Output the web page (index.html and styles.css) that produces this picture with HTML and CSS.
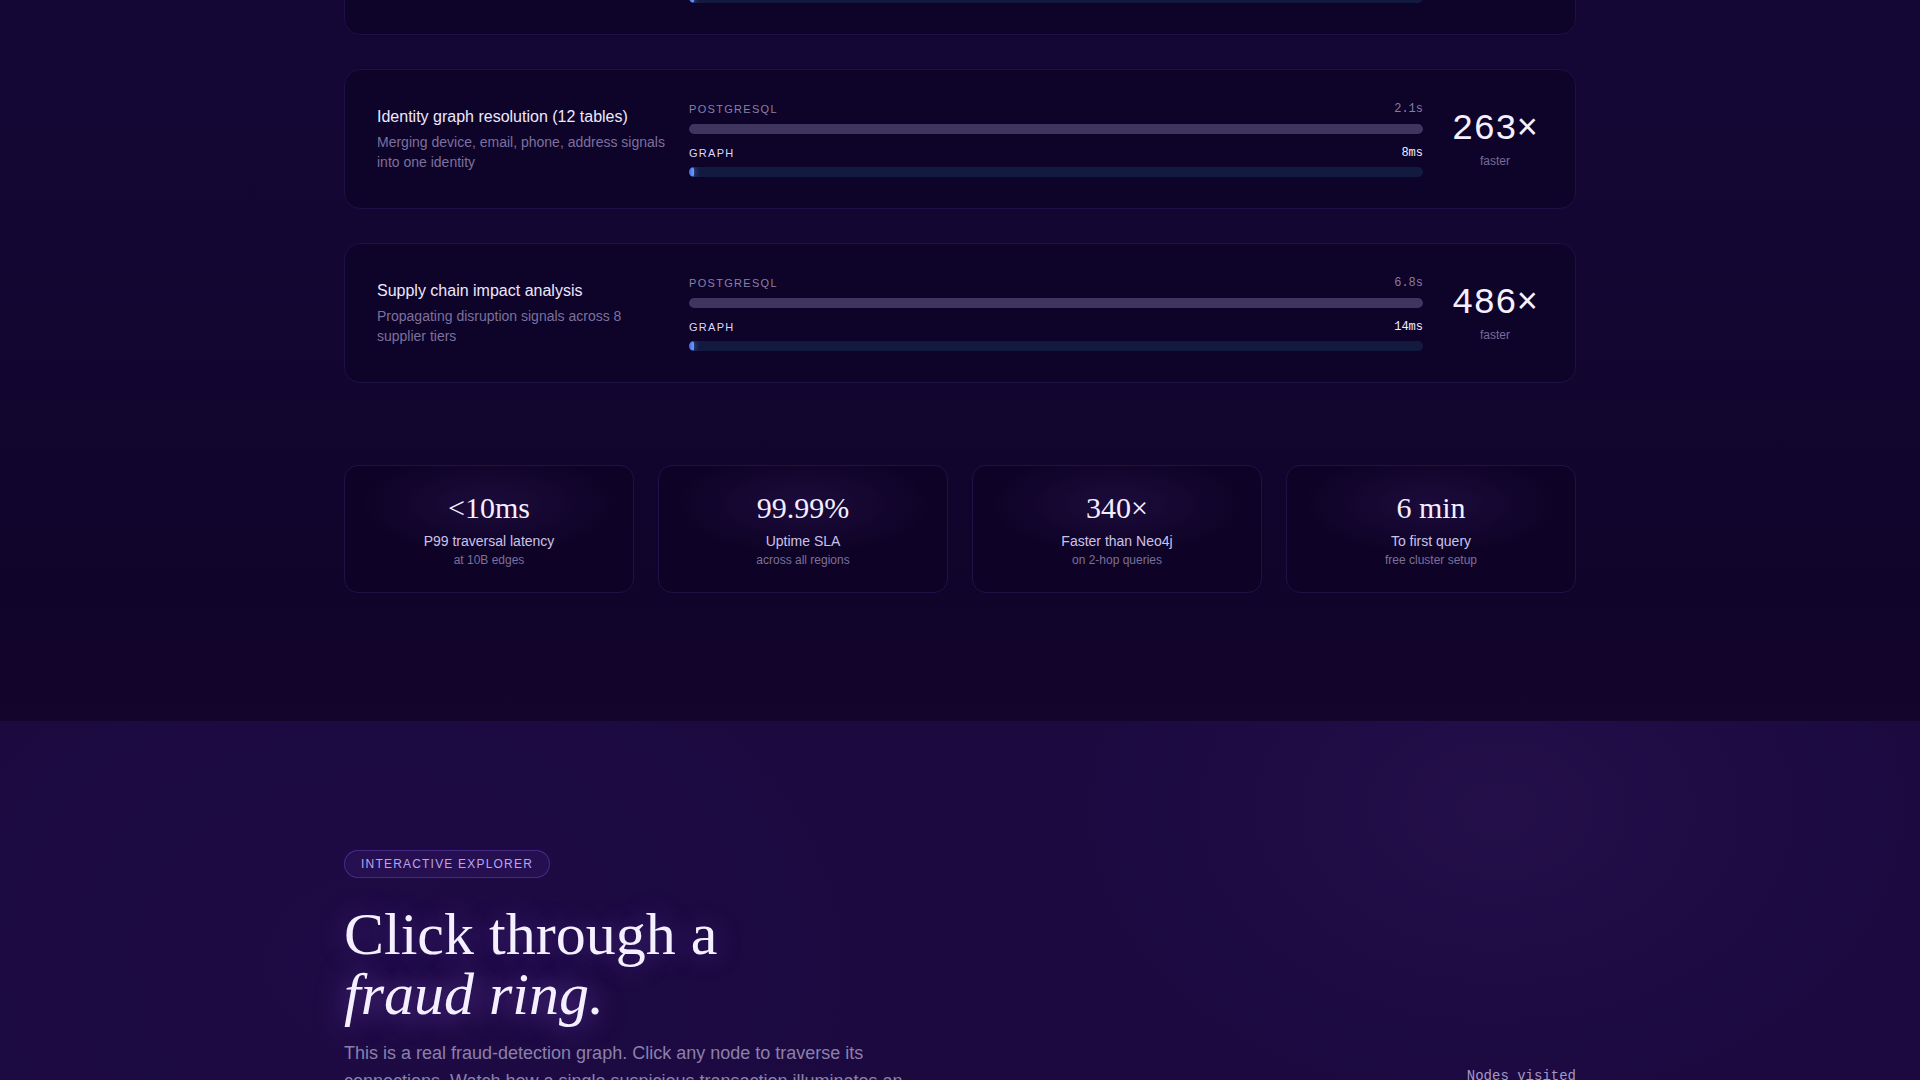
FILE: index.html
```html
<!DOCTYPE html>
<html lang="en">
<head>
<meta charset="utf-8">
<title>Graph benchmarks</title>
<link rel="stylesheet" href="styles.css">
</head>
<body>
<section class="bench">
  <div class="container">
    <div class="bench-list">
      <div class="bench-row">
        <div class="bench-copy">
          <div class="bench-title">Fraud ring detection (6 hops)</div>
          <div class="bench-desc">Following shared devices and cards across linked accounts</div>
        </div>
        <div class="bench-bars">
          <div class="bar-head"><span class="bar-name">POSTGRESQL</span><span class="bar-time">4.7s</span></div>
          <div class="track pg"><div class="fill pg-fill" style="width:100%"></div></div>
          <div class="bar-head graph-head"><span class="bar-name">GRAPH</span><span class="bar-time">11ms</span></div>
          <div class="track gr"><div class="fill gr-fill" style="width:0.3%"></div></div>
        </div>
        <div class="speed"><div class="speed-num">427×</div><div class="speed-lbl">faster</div></div>
      </div>

      <div class="bench-row">
        <div class="bench-copy">
          <div class="bench-title">Identity graph resolution (12 tables)</div>
          <div class="bench-desc">Merging device, email, phone, address signals into one identity</div>
        </div>
        <div class="bench-bars">
          <div class="bar-head"><span class="bar-name">POSTGRESQL</span><span class="bar-time">2.1s</span></div>
          <div class="track pg"><div class="fill pg-fill" style="width:100%"></div></div>
          <div class="bar-head graph-head"><span class="bar-name">GRAPH</span><span class="bar-time">8ms</span></div>
          <div class="track gr"><div class="fill gr-fill" style="width:0.38%"></div></div>
        </div>
        <div class="speed"><div class="speed-num">263×</div><div class="speed-lbl">faster</div></div>
      </div>

      <div class="bench-row">
        <div class="bench-copy">
          <div class="bench-title">Supply chain impact analysis</div>
          <div class="bench-desc">Propagating disruption signals across 8 supplier tiers</div>
        </div>
        <div class="bench-bars">
          <div class="bar-head"><span class="bar-name">POSTGRESQL</span><span class="bar-time">6.8s</span></div>
          <div class="track pg"><div class="fill pg-fill" style="width:100%"></div></div>
          <div class="bar-head graph-head"><span class="bar-name">GRAPH</span><span class="bar-time">14ms</span></div>
          <div class="track gr"><div class="fill gr-fill" style="width:0.21%"></div></div>
        </div>
        <div class="speed"><div class="speed-num">486×</div><div class="speed-lbl">faster</div></div>
      </div>
    </div>

    <div class="stats">
      <div class="stat">
        <div class="stat-val">&lt;10ms</div>
        <div class="stat-lbl">P99 traversal latency</div>
        <div class="stat-sub">at 10B edges</div>
      </div>
      <div class="stat">
        <div class="stat-val">99.99%</div>
        <div class="stat-lbl">Uptime SLA</div>
        <div class="stat-sub">across all regions</div>
      </div>
      <div class="stat">
        <div class="stat-val">340×</div>
        <div class="stat-lbl">Faster than Neo4j</div>
        <div class="stat-sub">on 2-hop queries</div>
      </div>
      <div class="stat">
        <div class="stat-val">6 min</div>
        <div class="stat-lbl">To first query</div>
        <div class="stat-sub">free cluster setup</div>
      </div>
    </div>
  </div>
</section>

<section class="explorer">
  <div class="container explorer-grid">
    <div class="explorer-copy">
      <span class="badge">INTERACTIVE EXPLORER</span>
      <h2 class="explorer-title">Click through a<br><em>fraud ring.</em></h2>
      <p class="explorer-text">This is a real fraud-detection graph. Click any node to traverse its connections. Watch how a single suspicious transaction illuminates an entire network of linked accounts.</p>
    </div>
    <div class="explorer-panel">
      <div class="panel-stats"><span class="panel-lbl">Nodes visited</span></div>
    </div>
  </div>
</section>
</body>
</html>
```

FILE: styles.css
```css
* { box-sizing: border-box; }

html, body {
  margin: 0;
  padding: 0;
  height: 1080px;
  overflow: hidden;
  background: #12052e;
  font-family: "Liberation Sans", Arial, sans-serif;
}

.container {
  width: 1232px;
  margin: 0 auto;
}

/* ---------- benchmark section ---------- */
.bench {
  background: linear-gradient(180deg, #140737 0%, #130632 45%, #11042a 85%, #13052c 100%);
  padding-bottom: 128px;
}

.bench-list {
  display: flex;
  flex-direction: column;
  gap: 34px;
  margin-top: -105px;
}

.bench-row {
  display: grid;
  grid-template-columns: 290px 1fr 96px;
  column-gap: 24px;
  align-items: center;
  padding: 31px 32px;
  background: #0e0328;
  border: 1px solid #1d1146;
  border-radius: 16px;
}

.bench-title {
  color: #ede8ff;
  font-size: 16px;
  line-height: 22px;
}

.bench-desc {
  margin-top: 4px;
  color: #7c719e;
  font-size: 14px;
  line-height: 20px;
}

.bench-bars { margin-left: -2px; }

.bar-head {
  display: flex;
  justify-content: space-between;
  align-items: center;
  height: 16px;
  margin-bottom: 7px;
}

.graph-head {
  margin-top: 11px;
  margin-bottom: 6px;
}

.bar-name {
  font-size: 11px;
  letter-spacing: 1.3px;
  color: #8a80a8;
}

.graph-head .bar-name { color: #ddd6fa; }

.bar-time {
  font-family: "Liberation Mono", "DejaVu Sans Mono", monospace;
  font-size: 12px;
  color: #877da6;
}

.graph-head .bar-time { color: #f2eeff; }

.track {
  height: 10px;
  border-radius: 999px;
  overflow: hidden;
}

.track.pg { background: #2a2046; }
.track.gr { background: #131a3f; }

.fill {
  height: 100%;
  border-radius: 999px;
}

.pg-fill { background: #40355e; }

.gr-fill {
  min-width: 5px;
  background: linear-gradient(90deg, #3f6ee8, #6f9dff);
  box-shadow: 0 0 6px rgba(100, 150, 255, 0.7);
}

.speed { text-align: center; }

.speed-num {
  font-family: "Liberation Mono", "DejaVu Sans Mono", monospace;
  font-size: 36px;
  line-height: 40px;
  color: #f4f0ff;
}

.speed-lbl {
  margin-top: 3px;
  font-size: 12px;
  line-height: 16px;
  color: #786d98;
}

/* ---------- stats ---------- */
.stats {
  display: grid;
  grid-template-columns: repeat(4, 1fr);
  gap: 24px;
  margin-top: 82px;
}

.stat {
  text-align: center;
  padding: 24px 16px;
  border: 1px solid #1e1246;
  border-radius: 14px;
  background:
    radial-gradient(ellipse 45% 40% at 50% 30%, rgba(48, 22, 92, 0.4), rgba(48, 22, 92, 0) 100%),
    #0e0326;
}

.stat-val {
  font-family: "Liberation Serif", "Times New Roman", serif;
  font-size: 30px;
  line-height: 36px;
  color: #f3efff;
}

.stat-lbl {
  margin-top: 6px;
  font-size: 14px;
  line-height: 18px;
  color: #cbc2ea;
}

.stat-sub {
  margin-top: 2px;
  font-size: 12px;
  line-height: 16px;
  color: #7b7098;
}

/* ---------- explorer ---------- */
.explorer {
  padding-top: 129px;
  min-height: 400px;
  background:
    radial-gradient(ellipse 420px 300px at 78% 22%, rgba(56, 28, 96, 0.3), rgba(56, 28, 96, 0) 100%),
    radial-gradient(ellipse 500px 380px at 20% 60%, rgba(40, 16, 80, 0.3), rgba(40, 16, 80, 0) 100%),
    #1b0940;
}

.explorer-grid {
  display: grid;
  grid-template-columns: 580px 1fr;
  gap: 48px;
}

.badge {
  display: inline-block;
  padding: 5px 16px;
  font-size: 12px;
  line-height: 16px;
  letter-spacing: 1.2px;
  color: #b8a5ef;
  border: 1px solid rgba(140, 100, 240, 0.32);
  background: rgba(110, 70, 210, 0.1);
  border-radius: 999px;
}

.explorer-title {
  margin: 26px 0 0;
  font-family: "Liberation Serif", "Times New Roman", serif;
  font-weight: 400;
  font-size: 60px;
  line-height: 60px;
  color: #f4f0ff;
  text-shadow: 0 0 28px rgba(150, 100, 255, 0.35);
}

.explorer-title em {
  font-style: italic;
  text-shadow: 0 0 30px rgba(170, 110, 255, 0.6);
}

.explorer-text {
  margin: 15px 0 0;
  font-size: 18px;
  line-height: 28px;
  color: #8b80ac;
}

.explorer-panel {
  padding-top: 217px;
}

.panel-stats {
  display: flex;
  justify-content: flex-end;
}

.panel-lbl {
  font-family: "Liberation Mono", "DejaVu Sans Mono", monospace;
  font-size: 14px;
  line-height: 18px;
  color: #a497c6;
}
```
